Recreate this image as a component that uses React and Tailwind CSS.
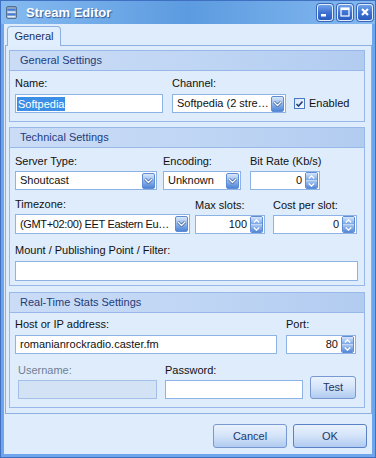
import React from 'react';

const font = "font-['Liberation_Sans',Arial,sans-serif]";

const Chevron = ({ up }) => (
  <svg width="9" height="6" viewBox="0 0 9 6">
    <path d={up ? 'M1 5 L4.5 1.5 L8 5' : 'M1 1 L4.5 4.5 L8 1'} fill="none" stroke="#2f5597" strokeWidth="2.6" />
    <path d={up ? 'M1 5 L4.5 1.5 L8 5' : 'M1 1 L4.5 4.5 L8 1'} fill="none" stroke="#ffffff" strokeWidth="1.4" />
  </svg>
);

const SmallChevron = ({ up }) => (
  <svg width="7" height="4" viewBox="0 0 7 4">
    <path d={up ? 'M0.8 3.5 L3.5 0.8 L6.2 3.5' : 'M0.8 0.5 L3.5 3.2 L6.2 0.5'} fill="none" stroke="#ffffff" strokeWidth="1.2" />
  </svg>
);

const DropButton = () => (
  <div className="w-[13px] h-[16px] shrink-0 rounded-[2px] border border-[#5f8dd3] bg-gradient-to-b from-[#dbe8fb] via-[#8fb5ec] to-[#4f84d6] flex items-center justify-center">
    <Chevron />
  </div>
);

const SpinButton = () => (
  <div className="w-[13px] h-[17px] shrink-0 rounded-[2px] border border-[#5f8dd3] flex flex-col overflow-hidden">
    <div className="flex-1 flex items-center justify-center bg-gradient-to-b from-[#d6e6fb] to-[#7aa6e6] border-b border-[#c4d8f5]">
      <SmallChevron up />
    </div>
    <div className="flex-1 flex items-center justify-center bg-gradient-to-b from-[#a9c7f1] to-[#5587d7]">
      <SmallChevron />
    </div>
  </div>
);

const Label = ({ children, muted }) => (
  <div className={`h-[13px] leading-[13px] text-[11px] whitespace-nowrap ${muted ? 'text-[#6f7f92]' : 'text-[#111111]'}`}>
    {children}
  </div>
);

const Select = ({ value, width, tall, tight }) => (
  <div className={`${width} ${tall ? 'h-[20px]' : 'h-[19px]'} bg-white border border-[#8db2e6] flex items-center pl-[4px] pr-[1px]`}>
    <span className={`flex-1 whitespace-nowrap text-[11px] text-[#111111] ${tight ? 'tracking-[-0.35px]' : ''}`}>{value}</span>
    <DropButton />
  </div>
);

const Spin = ({ value, width }) => (
  <div className={`${width} h-[19px] bg-white border border-[#8db2e6] flex items-center justify-end pr-[1px] gap-[3px]`}>
    <span className="text-[11px] text-[#111111]">{value}</span>
    <SpinButton />
  </div>
);

const TextBox = ({ width, value, disabled, tall }) => (
  <div
    className={`${width} ${tall ? 'h-[20px]' : 'h-[19px]'} border flex items-center pl-[4px] text-[11px] text-[#111111] ${
      disabled ? 'bg-[#d3e2f5] border-[#a4c0e8]' : 'bg-white border-[#8db2e6]'
    }`}
  >
    {value}
  </div>
);

const Button = ({ children, width, height, strong }) => (
  <div
    className={`${width} ${height} rounded-[3px] border ${
      strong ? 'border-[#5a80c6]' : 'border-[#7798d0]'
    } bg-gradient-to-b from-[#eaf2fd] via-[#d3e3f9] to-[#b0cbf0] flex items-center justify-center text-[11px] text-[#1c3769]`}
  >
    {children}
  </div>
);

const Group = ({ title, children, className }) => (
  <div className={`w-[356px] border border-[#97b8e8] ${className}`}>
    <div className="h-[20px] border-b border-[#97b8e8] bg-gradient-to-r from-[#cadcf6] via-[#c0d6f4] to-[#b2ccf1] flex items-center pl-[10px] text-[11px] text-[#1f3c7a]">
      {title}
    </div>
    {children}
  </div>
);

const TitleButton = ({ children }) => (
  <div className="w-[16px] h-[17px] rounded-[3px] border border-[#e3ecfa] bg-gradient-to-b from-[#6fa2ea] via-[#3f73d2] to-[#2a5bbf] flex items-center justify-center shadow-[0_0_0_1px_#3a68b8]">
    {children}
  </div>
);

const AppIcon = () => (
  <svg width="11" height="13" viewBox="0 0 11 13">
    <rect x="0.5" y="0.5" width="10" height="12" rx="1.5" fill="#8aa0bd" stroke="#56708f" />
    <rect x="1.5" y="3" width="8" height="1.6" fill="#3f7ee0" />
    <rect x="1.5" y="5.3" width="8" height="1.6" fill="#dfeafb" />
    <rect x="1.5" y="7.6" width="8" height="1.6" fill="#3f7ee0" />
    <rect x="1.5" y="9.9" width="8" height="1.6" fill="#dfeafb" />
  </svg>
);

export default function App() {
  return (
    <div className={`${font} w-[376px] h-[458px] bg-[#6fa5ea] border border-[#3f70c2] flex flex-col overflow-hidden`}>
      {/* title bar */}
      <div className="h-[23px] shrink-0 bg-gradient-to-r from-[#86bbf1] via-[#5c9be0] to-[#84b9f0] flex items-center pl-[5px] pr-[2px]">
        <AppIcon />
        <span className="ml-[9px] text-[13px] font-bold text-white [text-shadow:1px_1px_1px_rgba(20,50,110,0.7)]">
          Stream Editor
        </span>
        <div className="ml-auto flex items-center gap-[4px] mt-[-1px]">
          <TitleButton>
            <svg width="10" height="10" viewBox="0 0 10 10">
              <rect x="1" y="7" width="5" height="2.5" fill="#fff" />
            </svg>
          </TitleButton>
          <TitleButton>
            <svg width="10" height="10" viewBox="0 0 10 10">
              <rect x="1" y="1" width="8" height="8" fill="none" stroke="#fff" strokeWidth="1.2" />
              <rect x="1" y="1" width="8" height="2" fill="#fff" />
            </svg>
          </TitleButton>
          <TitleButton>
            <svg width="10" height="10" viewBox="0 0 10 10">
              <path d="M2 2 L8 8 M8 2 L2 8" stroke="#fff" strokeWidth="2.2" />
            </svg>
          </TitleButton>
        </div>
      </div>

      {/* body */}
      <div className="mx-[3px] mb-[3px] flex-1 bg-[#dfecfc] flex flex-col">
        {/* tabs */}
        <div className="h-[21px] shrink-0 flex items-end pl-[3px]">
          <div className="w-[54px] h-[20px] rounded-t-[4px] border border-b-0 border-[#8db0e4] bg-[#e1eefd] flex items-center justify-center text-[11px] text-[#1d2f5c] relative top-[1px] z-10">
            General
          </div>
        </div>

        {/* panel */}
        <div className="ml-[1px] w-[367px] h-[369px] border border-[#8db0e4] pt-[4px] pl-[3px] bg-[#dfecfc]">
          <Group title="General Settings">
            <div className="pl-[5px] pt-[6px] pb-[8px] flex items-end">
              <div className="flex flex-col gap-[4px]">
                <Label>Name:</Label>
                <div className="w-[148px] h-[19px] bg-white border border-[#8db2e6] flex items-center pl-[1px]">
                  <span className="bg-[#3a8ee6] text-white text-[11px] leading-[14px] px-[1px]">Softpedia</span>
                </div>
              </div>
              <div className="ml-[9px] flex flex-col gap-[4px]">
                <Label>Channel:</Label>
                <Select width="w-[114px]" value="Softpedia (2 stre…" />
              </div>
              <div className="ml-[8px] h-[19px] flex items-center gap-[4px]">
                <div className="w-[11px] h-[11px] border border-[#4b78c2] bg-gradient-to-br from-[#d7e5f8] to-[#f7faff] flex items-center justify-center">
                  <svg width="9" height="8" viewBox="0 0 9 8">
                    <path d="M1.5 4 L3.5 6 L7.5 1.5" fill="none" stroke="#21407c" strokeWidth="1.6" />
                  </svg>
                </div>
                <span className="text-[11px] text-[#111111]">Enabled</span>
              </div>
            </div>
          </Group>

          <Group title="Technical Settings" className="mt-[5px]">
            <div className="pl-[5px] pt-[7px] pb-[4px] flex flex-col">
              <div className="flex">
                <div className="flex flex-col gap-[3px]">
                  <Label>Server Type:</Label>
                  <Select width="w-[142px]" value="Shoutcast" />
                </div>
                <div className="ml-[6px] flex flex-col gap-[3px]">
                  <Label>Encoding:</Label>
                  <Select width="w-[78px]" value="Unknown" />
                </div>
                <div className="ml-[9px] flex flex-col gap-[3px]">
                  <Label>Bit Rate (Kb/s)</Label>
                  <Spin width="w-[70px]" value="0" />
                </div>
              </div>
              <div className="mt-[8px] flex">
                <div className="flex flex-col gap-[3px]">
                  <Label>Timezone:</Label>
                  <Select width="w-[175px]" value="(GMT+02:00) EET Eastern Eu…" tall tight />
                </div>
                <div className="ml-[5px] flex flex-col gap-[3px] justify-end">
                  <Label>Max slots:</Label>
                  <Spin width="w-[70px]" value="100" />
                </div>
                <div className="ml-[8px] flex flex-col gap-[3px] justify-end">
                  <Label>Cost per slot:</Label>
                  <Spin width="w-[84px]" value="0" />
                </div>
              </div>
              <div className="mt-[10px] flex flex-col gap-[4px]">
                <Label>Mount / Publishing Point / Filter:</Label>
                <TextBox width="w-[343px]" tall />
              </div>
            </div>
          </Group>

          <Group title="Real-Time Stats Settings" className="mt-[6px]">
            <div className="pl-[5px] pt-[5px] pb-[8px] flex flex-col">
              <div className="flex">
                <div className="flex flex-col gap-[4px]">
                  <Label>Host or IP address:</Label>
                  <TextBox width="w-[262px]" value="romanianrockradio.caster.fm" />
                </div>
                <div className="ml-[9px] flex flex-col gap-[4px]">
                  <Label>Port:</Label>
                  <Spin width="w-[70px]" value="80" />
                </div>
              </div>
              <div className="mt-[10px] flex items-end">
                <div className="ml-[3px] flex flex-col gap-[3px]">
                  <Label muted>Username:</Label>
                  <TextBox width="w-[139px]" disabled />
                </div>
                <div className="ml-[8px] flex flex-col gap-[3px]">
                  <Label>Password:</Label>
                  <TextBox width="w-[138px]" />
                </div>
                <div className="ml-[7px]">
                  <Button width="w-[46px]" height="h-[23px]">Test</Button>
                </div>
              </div>
            </div>
          </Group>
        </div>

        {/* dialog buttons */}
        <div className="mt-[10px] pr-[5px] flex justify-end gap-[6px]">
          <Button width="w-[74px]" height="h-[24px]">Cancel</Button>
          <Button width="w-[74px]" height="h-[24px]" strong>OK</Button>
        </div>
      </div>
    </div>
  );
}
